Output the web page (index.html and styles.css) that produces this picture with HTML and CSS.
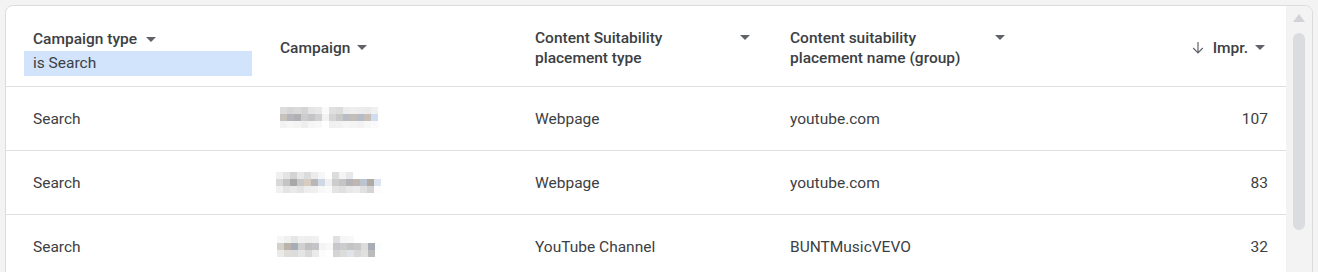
FILE: index.html
```html
<!DOCTYPE html>
<html>
<head>
<meta charset="utf-8">
<link rel="stylesheet" href="styles.css">
</head>
<body>
<div class="card">
  <div class="table">
    <div class="row head">
      <div class="cell c1">
        <div class="hlabel"><span>Campaign type</span><span class="dd"><i class="tri"></i></span></div>
        <div class="chip">is Search</div>
      </div>
      <div class="cell c2">
        <div class="hlabel"><span>Campaign</span><span class="dd"><i class="tri"></i></span></div>
      </div>
      <div class="cell c3">
        <div class="hlabel"><span class="wrap">Content Suitability placement type</span><span class="dd"><i class="tri"></i></span></div>
      </div>
      <div class="cell c4">
        <div class="hlabel"><span class="wrap">Content suitability placement name (group)</span><span class="dd"><i class="tri"></i></span></div>
      </div>
      <div class="cell c5">
        <div class="hlabel">
          <svg class="sort" width="12" height="13" viewBox="0 0 12 13"><path d="M6 1v10.5M1.2 7L6 11.8 10.8 7" fill="none" stroke="#5f6368" stroke-width="1.2"/></svg>
          <span>Impr.</span><span class="dd"><i class="tri"></i></span>
        </div>
      </div>
    </div>
    <div class="row">
      <div class="cell c1">Search</div>
      <div class="cell c2">
        <svg class="blur b1" width="98" height="21" viewBox="0 0 14 3">
          <rect x="0" y="0" width="1" height="1" fill="#dcdcdc"/><rect x="1" y="0" width="1" height="1" fill="#d6d6d8"/><rect x="2" y="0" width="1" height="1" fill="#dadada"/><rect x="3" y="0" width="1" height="1" fill="#d4d4d6"/><rect x="4" y="0" width="1" height="1" fill="#e4e4e4"/><rect x="5" y="0" width="1" height="1" fill="#e8e8e8"/><rect x="6" y="0" width="1" height="1" fill="#fafafa"/><rect x="7" y="0" width="1" height="1" fill="#e0e0e0"/><rect x="8" y="0" width="1" height="1" fill="#dcdcdc"/><rect x="9" y="0" width="1" height="1" fill="#ececec"/><rect x="10" y="0" width="1" height="1" fill="#eeeeee"/><rect x="11" y="0" width="1" height="1" fill="#ececec"/><rect x="12" y="0" width="1" height="1" fill="#eaeaea"/><rect x="13" y="0" width="1" height="1" fill="#eef0f2"/>
          <rect x="0" y="1" width="1" height="1" fill="#c8c2bc"/><rect x="1" y="1" width="1" height="1" fill="#b4b6bc"/><rect x="2" y="1" width="1" height="1" fill="#b0b0b4"/><rect x="3" y="1" width="1" height="1" fill="#cccccc"/><rect x="4" y="1" width="1" height="1" fill="#c4c4c6"/><rect x="5" y="1" width="1" height="1" fill="#d0d0d0"/><rect x="6" y="1" width="1" height="1" fill="#f2f2f2"/><rect x="7" y="1" width="1" height="1" fill="#d4d4d4"/><rect x="8" y="1" width="1" height="1" fill="#c8c8c8"/><rect x="9" y="1" width="1" height="1" fill="#b8bcc4"/><rect x="10" y="1" width="1" height="1" fill="#c4beb8"/><rect x="11" y="1" width="1" height="1" fill="#b4bcc8"/><rect x="12" y="1" width="1" height="1" fill="#c8c0b8"/><rect x="13" y="1" width="1" height="1" fill="#d0dcf0"/>
          <rect x="0" y="2" width="1" height="1" fill="#f2f2f2"/><rect x="1" y="2" width="1" height="1" fill="#f6f6f6"/><rect x="2" y="2" width="1" height="1" fill="#f4f4f4"/><rect x="3" y="2" width="1" height="1" fill="#eeeeee"/><rect x="4" y="2" width="1" height="1" fill="#f6f6f6"/><rect x="5" y="2" width="1" height="1" fill="#f8f8f8"/><rect x="6" y="2" width="1" height="1" fill="#ffffff"/><rect x="7" y="2" width="1" height="1" fill="#f0f0f0"/><rect x="8" y="2" width="1" height="1" fill="#f2f2f2"/><rect x="9" y="2" width="1" height="1" fill="#f6f6f6"/><rect x="10" y="2" width="1" height="1" fill="#f4f4f4"/><rect x="11" y="2" width="1" height="1" fill="#f2f2f2"/><rect x="12" y="2" width="1" height="1" fill="#f8f8f8"/><rect x="13" y="2" width="1" height="1" fill="#fafafa"/>
        </svg>
      </div>
      <div class="cell c3">Webpage</div>
      <div class="cell c4">youtube.com</div>
      <div class="cell c5 num">107</div>
    </div>
    <div class="row">
      <div class="cell c1">Search</div>
      <div class="cell c2">
        <svg class="blur b2" width="105" height="21" viewBox="0 0 15 3">
          <rect x="0" y="0" width="1" height="1" fill="#f0f0f0"/><rect x="1" y="0" width="1" height="1" fill="#e4e4e4"/><rect x="2" y="0" width="1" height="1" fill="#d4d4d4"/><rect x="3" y="0" width="1" height="1" fill="#e8e8e8"/><rect x="4" y="0" width="1" height="1" fill="#dcdcdc"/><rect x="5" y="0" width="1" height="1" fill="#ececec"/><rect x="6" y="0" width="1" height="1" fill="#f4f6f8"/><rect x="7" y="0" width="1" height="1" fill="#ffffff"/><rect x="8" y="0" width="1" height="1" fill="#dcdcdc"/><rect x="9" y="0" width="1" height="1" fill="#f4f4f4"/><rect x="10" y="0" width="1" height="1" fill="#e8e8e8"/><rect x="11" y="0" width="1" height="1" fill="#ffffff"/><rect x="12" y="0" width="1" height="1" fill="#ffffff"/><rect x="13" y="0" width="1" height="1" fill="#ffffff"/><rect x="14" y="0" width="1" height="1" fill="#ffffff"/>
          <rect x="0" y="1" width="1" height="1" fill="#d8d8d8"/><rect x="1" y="1" width="1" height="1" fill="#c4c4c4"/><rect x="2" y="1" width="1" height="1" fill="#a8a8a8"/><rect x="3" y="1" width="1" height="1" fill="#c8c8c8"/><rect x="4" y="1" width="1" height="1" fill="#d8ccc0"/><rect x="5" y="1" width="1" height="1" fill="#b8b8b8"/><rect x="6" y="1" width="1" height="1" fill="#d0d8e8"/><rect x="7" y="1" width="1" height="1" fill="#f0f0f0"/><rect x="8" y="1" width="1" height="1" fill="#cccccc"/><rect x="9" y="1" width="1" height="1" fill="#c4c4c4"/><rect x="10" y="1" width="1" height="1" fill="#b4b4b8"/><rect x="11" y="1" width="1" height="1" fill="#c0b8b0"/><rect x="12" y="1" width="1" height="1" fill="#bcc4d0"/><rect x="13" y="1" width="1" height="1" fill="#b0aaa4"/><rect x="14" y="1" width="1" height="1" fill="#dce4f0"/>
          <rect x="0" y="2" width="1" height="1" fill="#f0f0f0"/><rect x="1" y="2" width="1" height="1" fill="#e4e4e4"/><rect x="2" y="2" width="1" height="1" fill="#eaeaea"/><rect x="3" y="2" width="1" height="1" fill="#e4e4e6"/><rect x="4" y="2" width="1" height="1" fill="#eeeeee"/><rect x="5" y="2" width="1" height="1" fill="#f0f0f0"/><rect x="6" y="2" width="1" height="1" fill="#f8f8f8"/><rect x="7" y="2" width="1" height="1" fill="#fafafa"/><rect x="8" y="2" width="1" height="1" fill="#e4e4e4"/><rect x="9" y="2" width="1" height="1" fill="#e0e0e0"/><rect x="10" y="2" width="1" height="1" fill="#e8e8e8"/><rect x="11" y="2" width="1" height="1" fill="#ececec"/><rect x="12" y="2" width="1" height="1" fill="#e0e0e0"/><rect x="13" y="2" width="1" height="1" fill="#d4d4d4"/><rect x="14" y="2" width="1" height="1" fill="#fcfcfc"/>
        </svg>
      </div>
      <div class="cell c3">Webpage</div>
      <div class="cell c4">youtube.com</div>
      <div class="cell c5 num">83</div>
    </div>
    <div class="row">
      <div class="cell c1">Search</div>
      <div class="cell c2">
        <svg class="blur b3" width="105" height="21" viewBox="0 0 15 3">
          <rect x="0" y="0" width="1" height="1" fill="#f4f6f8"/><rect x="1" y="0" width="1" height="1" fill="#f0f0f0"/><rect x="2" y="0" width="1" height="1" fill="#e4e6e8"/><rect x="3" y="0" width="1" height="1" fill="#f0f0f0"/><rect x="4" y="0" width="1" height="1" fill="#eeeeee"/><rect x="5" y="0" width="1" height="1" fill="#f0f0f0"/><rect x="6" y="0" width="1" height="1" fill="#ffffff"/><rect x="7" y="0" width="1" height="1" fill="#ffffff"/><rect x="8" y="0" width="1" height="1" fill="#e0e0e4"/><rect x="9" y="0" width="1" height="1" fill="#f6f6f6"/><rect x="10" y="0" width="1" height="1" fill="#f8f8f8"/><rect x="11" y="0" width="1" height="1" fill="#ffffff"/><rect x="12" y="0" width="1" height="1" fill="#ffffff"/><rect x="13" y="0" width="1" height="1" fill="#ffffff"/><rect x="14" y="0" width="1" height="1" fill="#ffffff"/>
          <rect x="0" y="1" width="1" height="1" fill="#d4d0cc"/><rect x="1" y="1" width="1" height="1" fill="#bcb4ac"/><rect x="2" y="1" width="1" height="1" fill="#a4acb8"/><rect x="3" y="1" width="1" height="1" fill="#d0d0d0"/><rect x="4" y="1" width="1" height="1" fill="#c0c0c0"/><rect x="5" y="1" width="1" height="1" fill="#c4c4c8"/><rect x="6" y="1" width="1" height="1" fill="#f4f4f4"/><rect x="7" y="1" width="1" height="1" fill="#f8f8f8"/><rect x="8" y="1" width="1" height="1" fill="#c8c8cc"/><rect x="9" y="1" width="1" height="1" fill="#cccccc"/><rect x="10" y="1" width="1" height="1" fill="#c4c4c4"/><rect x="11" y="1" width="1" height="1" fill="#c8c8c8"/><rect x="12" y="1" width="1" height="1" fill="#dcdcdc"/><rect x="13" y="1" width="1" height="1" fill="#a8acb4"/><rect x="14" y="1" width="1" height="1" fill="#fafcfe"/>
          <rect x="0" y="2" width="1" height="1" fill="#eaeaea"/><rect x="1" y="2" width="1" height="1" fill="#e0dcd8"/><rect x="2" y="2" width="1" height="1" fill="#dcdcdc"/><rect x="3" y="2" width="1" height="1" fill="#e4e4e4"/><rect x="4" y="2" width="1" height="1" fill="#d8d8d8"/><rect x="5" y="2" width="1" height="1" fill="#eaeaea"/><rect x="6" y="2" width="1" height="1" fill="#fcfcfc"/><rect x="7" y="2" width="1" height="1" fill="#ffffff"/><rect x="8" y="2" width="1" height="1" fill="#d4d4d4"/><rect x="9" y="2" width="1" height="1" fill="#dcdcdc"/><rect x="10" y="2" width="1" height="1" fill="#e0e4e8"/><rect x="11" y="2" width="1" height="1" fill="#d8d8d8"/><rect x="12" y="2" width="1" height="1" fill="#e0e0e0"/><rect x="13" y="2" width="1" height="1" fill="#bcbcbc"/><rect x="14" y="2" width="1" height="1" fill="#ffffff"/>
        </svg>
      </div>
      <div class="cell c3">YouTube Channel</div>
      <div class="cell c4">BUNTMusicVEVO</div>
      <div class="cell c5 num">32</div>
    </div>
  </div>
  <div class="scrollbar">
    <div class="sb-up"></div>
    <div class="sb-thumb"></div>
  </div>
</div>
</body>
</html>
```

FILE: styles.css
```css
html, body {
  margin: 0;
  padding: 0;
  background: #f3f3f3;
  overflow: hidden;
  height: 272px;
}

.card {
  margin: 5px 0 0 5px;
  width: 1306px;
  height: 320px;
  border: 1px solid #dadce0;
  border-radius: 8px;
  background: #fff;
  display: flex;
  overflow: hidden;
  font-family: Roboto, "Liberation Sans", sans-serif;
  font-size: 15.5px;
  color: #3c4043;
}

.table {
  width: 1280px;
  flex: none;
}

.row {
  display: grid;
  grid-template-columns: 274px 255px 255px 255px 1fr;
  height: 64px;
  border-bottom: 1px solid #e0e0e0;
  box-sizing: border-box;
}

.row.head {
  height: 81px;
  font-weight: 500;
}

.cell {
  display: flex;
  align-items: center;
  min-width: 0;
}

.head .cell {
  padding-top: 3px;
  box-sizing: border-box;
}

.c1 {
  padding-left: 27px;
}

.head .c1 {
  flex-direction: column;
  align-items: flex-start;
  justify-content: flex-start;
  padding-top: 24px;
}

.hlabel {
  display: flex;
  align-items: center;
  line-height: 20px;
}

.head .c1 .hlabel {
  line-height: 19px;
}

.wrap {
  width: 198px;
}

.dd {
  width: 24px;
  height: 19px;
  display: flex;
  align-items: center;
  justify-content: center;
  align-self: flex-start;
}

.c1 .dd {
  margin-left: 2px;
}

.tri {
  display: block;
  width: 0;
  height: 0;
  border-left: 5.5px solid transparent;
  border-right: 5.5px solid transparent;
  border-top: 5.5px solid #5f6368;
}

.chip {
  margin-left: -9px;
  margin-top: 2px;
  width: 228px;
  height: 25px;
  box-sizing: border-box;
  padding-left: 9px;
  background: #d2e3fc;
  font-weight: 400;
  line-height: 25px;
}

.head .c5 {
  justify-content: flex-end;
  padding-right: 14px;
}

.sort {
  margin-right: 9px;
}

.num {
  justify-content: flex-end;
  padding-right: 18px;
}

.blur {
  display: block;
}

.b1 {
  margin-top: -2px;
}

.b2 {
  margin-left: -4px;
}

.b3 {
  margin-left: -3px;
}

.scrollbar {
  width: 26px;
  flex: none;
  background: #f3f3f3;
  display: flex;
  flex-direction: column;
  align-items: center;
}

.sb-up {
  margin-top: 8px;
  width: 0;
  height: 0;
  border-left: 6px solid transparent;
  border-right: 6px solid transparent;
  border-bottom: 8px solid #d2d3d6;
  margin-left: -1px;
}

.sb-thumb {
  margin-top: 11px;
  width: 12px;
  height: 197px;
  border-radius: 6px;
  background: #dadce0;
  margin-left: -1px;
}
```
